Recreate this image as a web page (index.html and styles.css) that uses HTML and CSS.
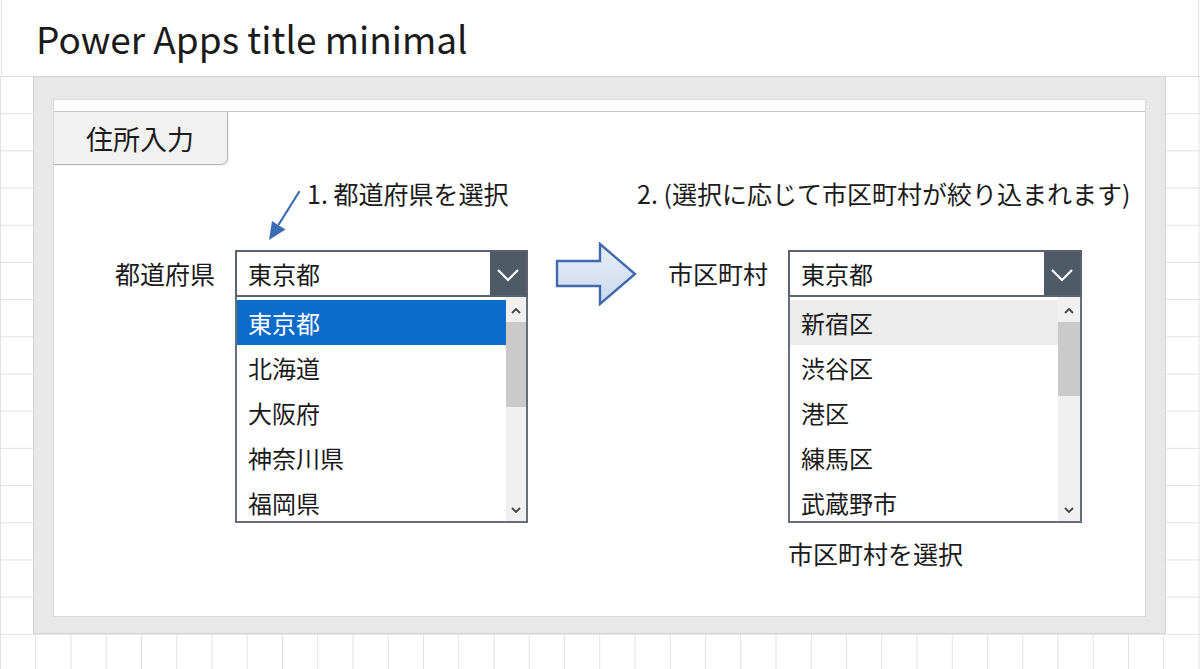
FILE: index.html
```html
<!DOCTYPE html>
<html lang="ja">
<head>
  <meta charset="UTF-8" />
  <meta name="viewport" content="width=device-width, initial-scale=1" />
  <title>Power Apps title minimal</title>
  <link rel="stylesheet" href="styles.css">
</head>
<body>

  <header class="page-head">
    <h1>Power Apps title minimal</h1>
  </header>

  <main class="canvas">
    <section class="frame">
      <div class="panel">

        <div class="tabbar">
          <div class="tab">住所入力</div>
        </div>

        <!-- 手順の説明 -->
        <div class="notes">
          <p class="note note-first">
            <svg class="pointer" viewBox="0 0 37 54" width="37" height="54">
              <line x1="34" y1="4" x2="14" y2="36" stroke="#3b6cb4" stroke-width="2.2" stroke-linecap="round" />
              <polygon points="4,52 20.5,41.5 7,33" fill="#3b6cb4" />
            </svg>
            1. 都道府県を選択
          </p>
          <p class="note">2. (選択に応じて市区町村が絞り込まれます)</p>
        </div>

        <div class="form-row">
          <span class="field-label">都道府県</span>

          <div class="combo">
            <div class="combo-head">
              <span class="combo-value">東京都</span>
              <span class="combo-btn">
                <svg viewBox="0 0 36 44" width="36" height="44">
                  <polyline points="8,18 18,28 28,18" fill="none" stroke="#fff" stroke-width="2.2" />
                </svg>
              </span>
            </div>
            <div class="combo-list">
              <ul class="options">
                <li class="is-selected">東京都</li>
                <li>北海道</li>
                <li>大阪府</li>
                <li>神奈川県</li>
                <li>福岡県</li>
              </ul>
              <div class="scrollbar">
                <span class="sb-btn">
                  <svg viewBox="0 0 20 22" width="20" height="22"><polyline points="6,13 10,9 14,13" fill="none" stroke="#444" stroke-width="1.8" /></svg>
                </span>
                <div class="sb-track"><span class="sb-thumb thumb-long"></span></div>
                <span class="sb-btn">
                  <svg viewBox="0 0 20 22" width="20" height="22"><polyline points="6,9 10,13 14,9" fill="none" stroke="#444" stroke-width="1.8" /></svg>
                </span>
              </div>
            </div>
          </div>

          <svg class="flow-arrow" viewBox="0 0 82 64" width="82" height="64">
            <defs>
              <linearGradient id="arrowFill" x1="0" y1="0" x2="0" y2="1">
                <stop offset="0" stop-color="#e8eef8" />
                <stop offset="1" stop-color="#cbd8ee" />
              </linearGradient>
            </defs>
            <polygon points="2,19 45,19 45,2 80,32 45,62 45,44 2,44" fill="url(#arrowFill)" stroke="#4169ad" stroke-width="2.4" stroke-linejoin="miter" />
          </svg>

          <span class="field-label">市区町村</span>

          <div class="combo-col">
            <div class="combo combo-wide">
              <div class="combo-head">
                <span class="combo-value">東京都</span>
                <span class="combo-btn">
                  <svg viewBox="0 0 36 44" width="36" height="44">
                    <polyline points="8,18 18,28 28,18" fill="none" stroke="#fff" stroke-width="2.2" />
                  </svg>
                </span>
              </div>
              <div class="combo-list">
                <ul class="options">
                  <li class="is-hover">新宿区</li>
                  <li>渋谷区</li>
                  <li>港区</li>
                  <li>練馬区</li>
                  <li>武蔵野市</li>
                </ul>
                <div class="scrollbar">
                  <span class="sb-btn">
                    <svg viewBox="0 0 20 22" width="20" height="22"><polyline points="6,13 10,9 14,13" fill="none" stroke="#444" stroke-width="1.8" /></svg>
                  </span>
                  <div class="sb-track"><span class="sb-thumb"></span></div>
                  <span class="sb-btn">
                    <svg viewBox="0 0 20 22" width="20" height="22"><polyline points="6,9 10,13 14,9" fill="none" stroke="#444" stroke-width="1.8" /></svg>
                  </span>
                </div>
              </div>
            </div>
            <p class="hint">市区町村を選択</p>
          </div>
        </div>

      </div>
    </section>
  </main>

</body>
</html>
```

FILE: styles.css
```css
/* ベース */
* {
  box-sizing: border-box;
}

body {
  margin: 0;
  font-family: "Noto Sans CJK JP", "Noto Sans", sans-serif;
  color: #1b1b1b;
  background: #fff;
  width: 1200px;
}

.page-head {
  height: 76px;
  border-left: 1px solid #e2e2e2;
  border-right: 1px solid #e2e2e2;
  margin: 0 1px;
}

.page-head h1 {
  margin: 0;
  padding-left: 34px;
  font-size: 37px;
  font-weight: 400;
  line-height: 76px;
}

/* 方眼の背景 */
.canvas {
  min-height: 593px;
  background-color: #fff;
  background-image:
    linear-gradient(to right, #e2e2e2 1px, transparent 1px),
    linear-gradient(to bottom, #e2e2e2 1px, transparent 1px);
  background-size: 35.26px 37.2px;
}

.frame {
  margin-left: 33px;
  width: 1133px;
  height: 558px;
  padding: 22px 19px 16px 19px;
  background: #e8e8e8;
  border: 1px solid #d3d3d3;
}

.panel {
  height: 100%;
  background: #fff;
  border: 1px solid #d8d8d8;
  padding-top: 11px;
}

/* タブ */
.tabbar {
  border-top: 1px solid #c6c6c6;
}

.tab {
  width: 174px;
  height: 53px;
  display: flex;
  align-items: center;
  padding-left: 32px;
  background: #f1f1f1;
  border-right: 1px solid #b8b8b8;
  border-bottom: 1px solid #b8b8b8;
  border-bottom-right-radius: 7px;
  box-shadow: 1px 1px 1px rgba(0, 0, 0, 0.06);
  font-size: 27px;
}

/* 説明文 */
.notes {
  display: flex;
  margin-top: 11px;
  padding-left: 253px;
}

.note {
  margin: 0;
  font-size: 25px;
  line-height: 34px;
  white-space: nowrap;
}

.note-first {
  position: relative;
  width: 330px;
}

.pointer {
  position: absolute;
  left: -42px;
  top: 12px;
}

/* 入力行 */
.form-row {
  display: flex;
  align-items: flex-start;
  margin-top: 40px;
  padding-left: 61px;
}

.field-label {
  width: 120px;
  flex-shrink: 0;
  font-size: 25px;
  line-height: 47px;
}

.combo {
  width: 293px;
  flex-shrink: 0;
}

.combo-wide {
  width: 294px;
}

.combo-head {
  height: 47px;
  display: flex;
  align-items: stretch;
  border: 2px solid #59626e;
  background: #fff;
}

.combo-value {
  flex: 1;
  padding-left: 11px;
  font-size: 24px;
  line-height: 43px;
}

.combo-btn {
  width: 36px;
  background: #4f5a67;
  display: flex;
  align-items: center;
  justify-content: center;
}

.combo-btn svg {
  display: block;
}

.combo-list {
  height: 226px;
  display: flex;
  border: 2px solid #666e7a;
  border-top: none;
  background: #fff;
  overflow: hidden;
}

.options {
  flex: 1;
  margin: 0;
  padding: 3px 0 0 0;
  list-style: none;
  overflow: hidden;
}

.options li {
  height: 45px;
  padding-left: 11px;
  font-size: 24px;
  line-height: 45px;
}

.options li.is-selected {
  background: #0b6bc9;
  color: #fff;
}

.options li.is-hover {
  background: #ececec;
}

.scrollbar {
  width: 20px;
  display: flex;
  flex-direction: column;
  background: #f0f0f0;
  padding-top: 3px;
}

.combo-wide .scrollbar {
  width: 22px;
}

.sb-btn {
  height: 22px;
  display: flex;
  justify-content: center;
}

.sb-btn svg {
  display: block;
}

.sb-track {
  flex: 1;
}

.sb-thumb {
  display: block;
  height: 74px;
  background: #cacaca;
}

.sb-thumb.thumb-long {
  height: 85px;
}

.flow-arrow {
  flex-shrink: 0;
  margin: -8px 31px 0 27px;
}

.hint {
  margin: 13px 0 0 0;
  font-size: 25px;
  line-height: 34px;
}
```
